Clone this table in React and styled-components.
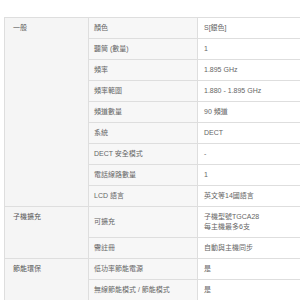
import React from "react";
import styled, { createGlobalStyle } from "styled-components";

const Global = createGlobalStyle`
  html, body { margin: 0; padding: 0; background: #fff; overflow: hidden; }
  body { font-family: "Liberation Sans", "Noto Sans CJK TC", sans-serif; }
`;

const Page = styled.div`
  width: 300px;
  height: 300px;
  overflow: hidden;
  padding: 17px 0 0 4px;
  box-sizing: border-box;
`;

const Table = styled.table`
  border-collapse: collapse;
  width: 330px;
  table-layout: fixed;
  font-size: 7px;
  line-height: 10px;
  color: #666;
`;

const Row = styled.tr`
  height: 21px;
`;

const GroupCell = styled.td`
  width: 71px;
  background: #f5f5f5;
  border: 1px solid #dedede;
  vertical-align: top;
  padding: 5px 4px 5px 8px;
  color: #555;
`;

const LabelCell = styled.td`
  width: 98px;
  background: #f7f7f7;
  border: 1px solid #dedede;
  vertical-align: middle;
  padding: 5px 5px;
`;

const ValueCell = styled.td`
  background: #fff;
  border: 1px solid #dedede;
  vertical-align: middle;
  padding: 5px 6px;
`;

const groups = [
  {
    name: "一般",
    rows: [
      ["顏色", "S[銀色]"],
      ["聽筒 (數量)", "1"],
      ["頻率", "1.895 GHz"],
      ["頻率範圍", "1.880 - 1.895 GHz"],
      ["頻道數量", "90 頻道"],
      ["系統", "DECT"],
      ["DECT 安全模式", "-"],
      ["電話線路數量", "1"],
      ["LCD 語言", "英文等14國語言"],
    ],
  },
  {
    name: "子機擴充",
    rows: [
      ["可擴充", ["子機型號TGCA28", "每主機最多6支"]],
      ["需註冊", "自動與主機同步"],
    ],
  },
  {
    name: "節能環保",
    rows: [
      ["低功率節能電源", "是"],
      ["無線節能模式 / 節能模式", "是"],
    ],
  },
];

export default function App() {
  return (
    <>
      <Global />
      <Page>
        <Table>
          <tbody>
            {groups.map((g) =>
              g.rows.map(([label, value], i) => (
                <Row key={g.name + i}>
                  {i === 0 && <GroupCell rowSpan={g.rows.length}>{g.name}</GroupCell>}
                  <LabelCell>{label}</LabelCell>
                  <ValueCell>
                    {Array.isArray(value)
                      ? value.map((v, k) => <div key={k}>{v}</div>)
                      : value}
                  </ValueCell>
                </Row>
              ))
            )}
          </tbody>
        </Table>
      </Page>
    </>
  );
}
